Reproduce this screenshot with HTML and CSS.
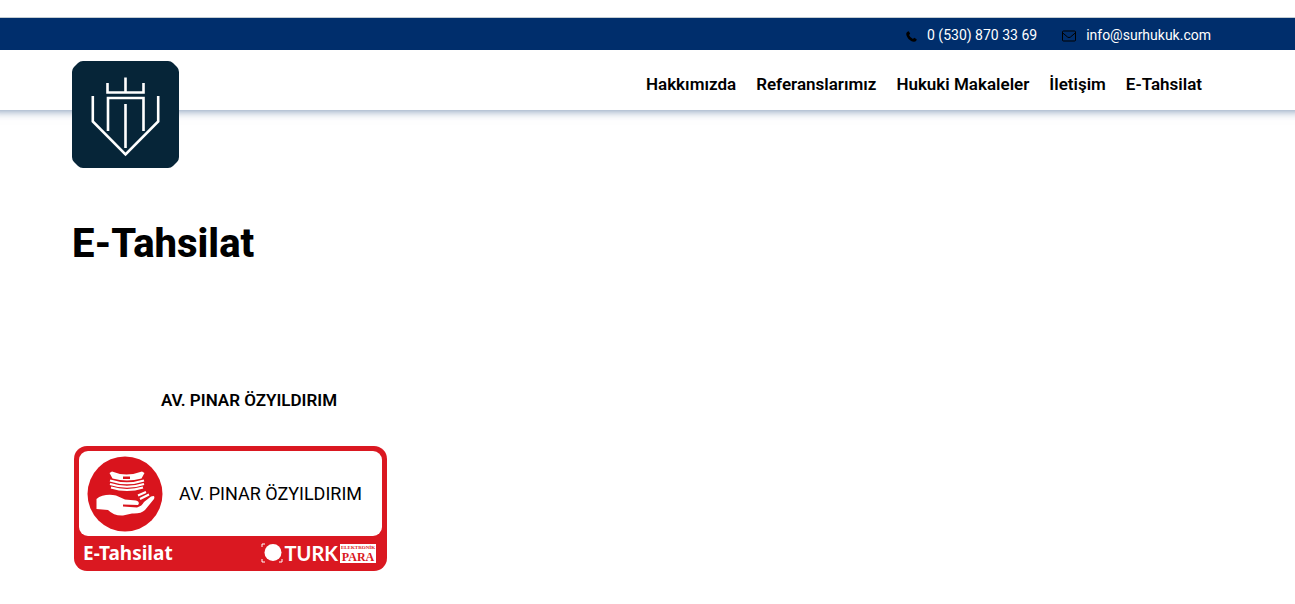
FILE: index.html
```html
<!DOCTYPE html>
<html lang="tr">
<head>
<meta charset="utf-8">
<meta name="viewport" content="width=device-width, initial-scale=1">
<title>E-Tahsilat</title>
<link rel="stylesheet" href="styles.css">
</head>
<body>
<div class="topbar">
  <a class="contact" href="tel:+905308703369">
    <svg class="contact-icon phone" viewBox="0 0 11 11" aria-hidden="true"><path d="M2.800.3 1.500.8Q.2 1.500.2 3C.8 6.800 4 10.300 7.900 10.800Q9.500 10.800 10.400 9.500L10.700 8.200 8.200 6.800 7 8Q4.200 6.800 3 4L4.200 2.800Z"/></svg>
    <span>0 (530) 870 33 69</span>
  </a>
  <a class="contact" href="mailto:info@surhukuk.com">
    <svg class="contact-icon mail" viewBox="0 0 14 12" aria-hidden="true"><rect x=".5" y="1" width="13" height="10" rx="1"/><path d="M.8 3 5.500 7Q7 8.200 8.500 7L13.200 3"/></svg>
    <span>info@surhukuk.com</span>
  </a>
</div>
<header class="header">
  <a class="logo" href="#" aria-label="Sur Hukuk">
    <svg viewBox="0 0 107 107" aria-hidden="true">
      <path class="logo-bg" d="M11 0H96Q99 0 101 2L105 6Q107 8 107 11V96Q107 99 105 101L101 105Q99 107 96 107H11Q8 107 6 105L2 101Q0 99 0 96V11Q0 8 2 6L6 2Q8 0 11 0Z"/>
      <path class="logo-line" d="M20.800 35V60.500L53.500 93.500 86.200 60.500V35M36 70V37H71.500V70M53.500 43V87M35.500 22V31.500H71.500V22M53.500 16.500V31.500"/>
    </svg>
  </a>
  <nav class="nav">
    <a href="#">Hakkımızda</a>
    <a href="#">Referanslarımız</a>
    <a href="#">Hukuki Makaleler</a>
    <a href="#">İletişim</a>
    <a href="#">E-Tahsilat</a>
  </nav>
</header>
<main class="content">
  <h1 class="title">E-Tahsilat</h1>
  <section class="lawyer">
    <h2 class="lawyer-name">AV. PINAR ÖZYILDIRIM</h2>
    <a class="card" href="#">
      <span class="card-top">
        <svg class="hand" viewBox="0 0 76 76" aria-hidden="true">
          <circle class="red" cx="38" cy="38" r="37.500"/>
          <path class="white" d="M25 15.500Q39 21.500 55 15.500L57.500 17 54.500 22.500Q40 26.500 25.500 22.500L22.500 17Z"/>
          <path class="white-line" d="M23 24.500Q40 30 57 24.500M23 28Q40 33.500 57 28M24 31.500Q40 36.500 56 31.500"/>
          <path class="red" d="M36 20.500H43V23H36Z"/>
          <path class="white" d="M9.500 43C14 39 22 38 29 39.500L38 43.500 49 44.500Q53.500 46 51 49L36 48.500V50.500L50 51.500Q55 50 57 46L64 40.500Q68.500 38.500 67 43L58 54Q54 58 45 57.500L36 59.500Q27 60 21 54L9.500 53Z"/>
          <path class="white-line" d="M51 39.500 59 36M53 43 62 38.500"/>
        </svg>
        <span class="card-name">AV. PINAR ÖZYILDIRIM</span>
      </span>
      <span class="card-foot">
        <span class="card-label">E-Tahsilat</span>
        <span class="brand">
          <svg class="brand-mark" viewBox="0 0 22 22" aria-hidden="true"><circle class="white" cx="12" cy="10.500" r="8.500"/><path class="brand-corner" d="M1 5V2H4M1 17V20H4M18 20H21V17"/></svg>
          <span class="brand-name">TURK</span>
          <span class="brand-box"><span class="brand-small">ELEKTRONİK</span><span class="brand-para">PARA</span></span>
        </span>
      </span>
    </a>
  </section>
</main>
</body>
</html>
```
FILE: styles.css
```css
* { box-sizing: border-box; }
body {
  margin: 0;
  padding-top: 17px;
  background: #fff;
  color: #000;
  font-family: Roboto, "Liberation Sans", sans-serif;
}
a { color: inherit; text-decoration: none; }
.topbar {
  display: flex;
  justify-content: flex-end;
  gap: 25px;
  height: 33px;
  padding: 2px 84px 0 72px;
  border-top: 1px solid #c4cdd2;
  background: #002e6c;
}
.contact {
  display: flex;
  align-items: center;
  gap: 10px;
  color: #fff;
  font-size: 14px;
  line-height: 20px;
}
.contact-icon { margin-top: 2px; }
.phone { width: 11px; height: 11px; fill: #000; }
.mail { width: 14px; height: 12px; fill: none; stroke: #000; }
.header {
  display: flex;
  justify-content: space-between;
  height: 60px;
  padding: 11px 93px 0 72px;
  box-shadow: 0 -10px 10px 10px #002e6c99;
  clip-path: inset(0 0 -60px 0);
}
.logo { width: 107px; height: 107px; }
.logo svg { display: block; width: 100%; }
.logo-bg { fill: #062538; }
.logo-line { fill: none; stroke: #fff; stroke-width: 2.600; }
.nav {
  display: flex;
  gap: 20px;
  padding-top: 11px;
  font-size: 17px;
  font-weight: 600;
  line-height: 24px;
}
.content { padding: 108px 72px 32px; }
.title {
  margin: 0;
  font-size: 40px;
  font-weight: 800;
  line-height: 52px;
}
.lawyer { width: 354px; max-width: 100%; padding-top: 118px; }
.lawyer-name {
  margin: 0 0 34px;
  font-size: 17px;
  font-weight: 600;
  line-height: 24px;
  text-align: center;
}
.card {
  display: block;
  width: 313px;
  max-width: 100%;
  margin-left: 2px;
  padding: 5px;
  border-radius: 13px;
  background: #da1821;
}
.card-top {
  display: flex;
  align-items: center;
  gap: 16px;
  height: 85px;
  padding-left: 8px;
  border-radius: 9px;
  background: #fff;
}
.hand { flex: none; width: 76px; height: 76px; }
.red { fill: #d9141d; }
.white { fill: #fff; }
.white-line { fill: none; stroke: #fff; stroke-width: 2; }
.card-name { font-size: 18px; line-height: 24px; white-space: nowrap; }
.card-foot {
  display: flex;
  align-items: center;
  justify-content: space-between;
  height: 30px;
  padding: 4px 6px 0 4px;
  color: #fff;
}
.card-label { font-family: "Noto Sans", sans-serif; font-size: 19px; font-weight: 700; line-height: 24px; }
.brand { display: flex; align-items: center; gap: 2px; }
.brand-mark { width: 22px; height: 22px; }
.brand-corner { fill: none; stroke: #fff; stroke-width: 1; }
.brand-name { font-family: Lato, sans-serif; font-size: 20px; font-weight: 700; line-height: 24px; }
.brand-box {
  display: flex;
  flex-direction: column;
  align-items: center;
  width: 36px;
  height: 19px;
  overflow: hidden;
  background: #fff;
  color: #da1821;
  font-family: "Liberation Serif", serif;
  font-weight: 700;
}
.brand-small { font-size: 5px; line-height: 7px; }
.brand-para { font-size: 12px; line-height: 12px; }
```
